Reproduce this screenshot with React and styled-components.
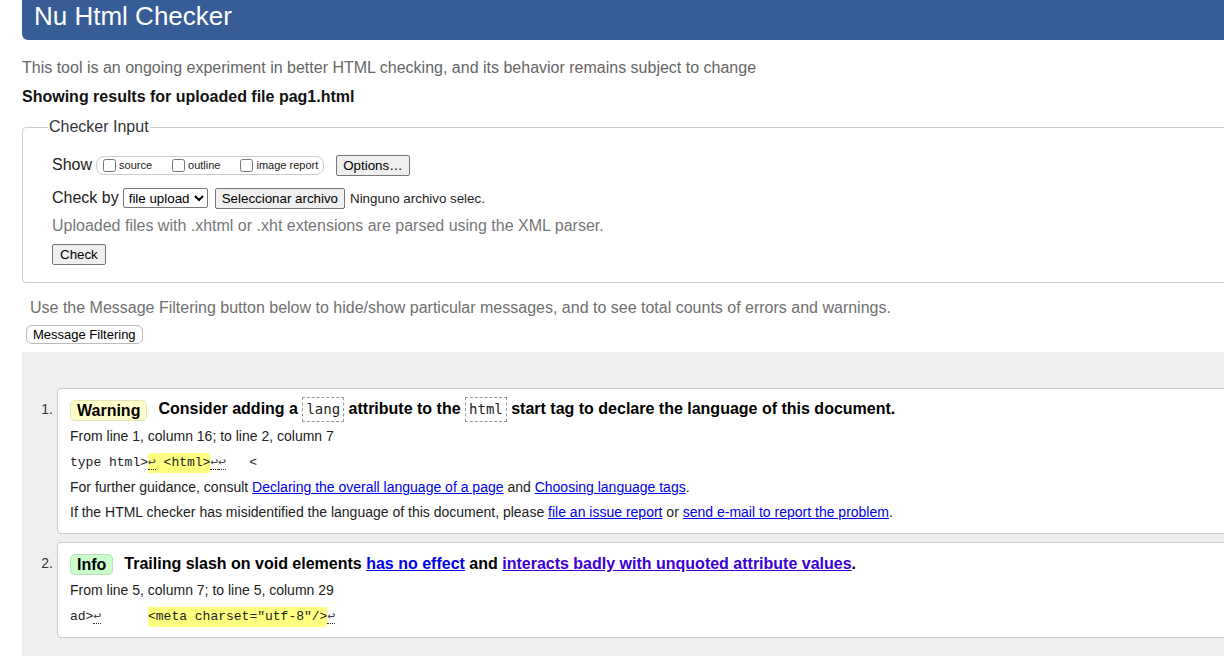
import React from 'react'
import styled, { createGlobalStyle } from 'styled-components'

const GlobalStyle = createGlobalStyle`
    html, body {
        margin: 0;
        padding: 0;
        background: #ffffff;
        overflow: hidden;
    }
    body {
        font-family: "Liberation Sans", Arial, sans-serif;
        color: #000;
    }
`

const LF = () => <Lf title="Line break">↩</Lf>

export default function App() {
    return (
        <Page>
            <GlobalStyle />
            <Header>
                <Title>Nu Html Checker</Title>
            </Header>
            <Intro>This tool is an ongoing experiment in better HTML checking, and its behavior remains subject to change</Intro>
            <Showing>Showing results for uploaded file pag1.html</Showing>

            <InputSet>
                <Legend>Checker Input</Legend>
                <FieldRow>
                    <FieldLabel>Show</FieldLabel>
                    <CheckGroup>
                        <CheckItem><input type="checkbox" />source</CheckItem>
                        <CheckItem><input type="checkbox" />outline</CheckItem>
                        <CheckItem><input type="checkbox" />image report</CheckItem>
                    </CheckGroup>
                    <Button $ml={12}>Options…</Button>
                </FieldRow>
                <FieldRow $mt={9}>
                    <FieldLabel>Check by</FieldLabel>
                    <Select defaultValue="file">
                        <option value="address">address</option>
                        <option value="file">file upload</option>
                        <option value="text">text input</option>
                    </Select>
                    <Button $ml={7}>Seleccionar archivo</Button>
                    <FileName>Ninguno archivo selec.</FileName>
                </FieldRow>
                <Note>Uploaded files with .xhtml or .xht extensions are parsed using the XML parser.</Note>
                <CheckButton>Check</CheckButton>
            </InputSet>

            <FilterNote>Use the Message Filtering button below to hide/show particular messages, and to see total counts of errors and warnings.</FilterNote>
            <FilterButton>Message Filtering</FilterButton>

            <Results>
                <Item>
                    <Num>1.</Num>
                    <Card>
                        <MsgTitle>
                            <Badge $kind="warning">Warning</Badge>
                            <MsgText>
                                Consider adding a <CodeChip>lang</CodeChip> attribute to the <CodeChip>html</CodeChip> start tag to declare the language of this document.
                            </MsgText>
                        </MsgTitle>
                        <Line>From line 1, column 16; to line 2, column 7</Line>
                        <Extract>type html&gt;<Mark><LF /> &lt;html&gt;</Mark><LF /><LF />   &lt;</Extract>
                        <Line>For further guidance, consult <Link href="#">Declaring the overall language of a page</Link> and <Link href="#">Choosing language tags</Link>.</Line>
                        <Line>If the HTML checker has misidentified the language of this document, please <Link href="#">file an issue report</Link> or <Link href="#">send e-mail to report the problem</Link>.</Line>
                    </Card>
                </Item>
                <Item>
                    <Num>2.</Num>
                    <Card>
                        <MsgTitle>
                            <Badge $kind="info">Info</Badge>
                            <MsgText>
                                Trailing slash on void elements <Link href="#">has no effect</Link> and <Link href="#" $visited>interacts badly with unquoted attribute values</Link>.
                            </MsgText>
                        </MsgTitle>
                        <Line>From line 5, column 7; to line 5, column 29</Line>
                        <Extract>ad&gt;<LF />      <Mark>&lt;meta charset="utf-8"/&gt;</Mark><LF /></Extract>
                    </Card>
                </Item>
            </Results>
        </Page>
    )
}

const Page = styled.div`
    width: 1280px;
    padding-left: 22px;
    box-sizing: border-box;
`

const Header = styled.header`
    height: 40px;
    background-color: #365d95;
    border-radius: 0 0 0 6px;
    padding-left: 12px;
    box-sizing: border-box;
`

const Title = styled.h1`
    margin: 0;
    font-size: 26px;
    font-weight: normal;
    line-height: 32px;
    color: #ffffff;
`

const Intro = styled.p`
    margin: 18px 0 0;
    font-size: 16px;
    line-height: 20px;
    color: #666666;
`

const Showing = styled.p`
    margin: 9px 0 0;
    font-size: 16px;
    line-height: 20px;
    font-weight: bold;
    color: #111;
`

const InputSet = styled.fieldset`
    margin: 10px 0 0;
    padding: 16px 29px 17px;
    border: 1px solid #cccccc;
    border-radius: 4px;
    min-width: 0;
`

const Legend = styled.legend`
    margin-left: -4px;
    padding: 0 1px;
    font-size: 16px;
    line-height: 20px;
    color: #333;
`

const FieldRow = styled.div`
    display: flex;
    align-items: center;
    height: 24px;
    margin-top: ${p => p.$mt || 0}px;
`

const FieldLabel = styled.span`
    font-size: 16px;
    color: #222;
    margin-right: 4px;
`

const CheckGroup = styled.span`
    display: inline-flex;
    align-items: center;
    gap: 20px;
    height: 17px;
    padding: 0 5px 0 6px;
    border: 1px solid #cccccc;
    border-radius: 8px;
`

const CheckItem = styled.label`
    display: inline-flex;
    align-items: center;
    font-size: 11px;
    color: #222;

    input {
        width: 13px;
        height: 13px;
        margin: 0 3px 0 0;
    }
`

const Button = styled.button`
    font-family: "Liberation Sans", Arial, sans-serif;
    font-size: 13.33px;
    line-height: 15px;
    color: #000;
    background: #efefef;
    border: 1px solid #767676;
    border-radius: 2px;
    padding: 2px 6px;
    margin: 0 0 0 ${p => p.$ml || 0}px;
`

const Select = styled.select`
    font-family: "Liberation Sans", Arial, sans-serif;
    font-size: 13.33px;
    height: 20px;
    width: 85px;
    padding: 0 0 0 1px;
    border: 1px solid #767676;
    border-radius: 2px;
    background: #fff;
    color: #000;
`

const FileName = styled.span`
    font-size: 13.33px;
    color: #222;
    margin-left: 5px;
`

const Note = styled.p`
    margin: 6px 0 0;
    font-size: 16px;
    line-height: 20px;
    color: #777777;
`

const CheckButton = styled(Button)`
    display: block;
    margin-top: 8px;
    padding: 2px 7px;
`

const FilterNote = styled.p`
    margin: 15px 0 0;
    padding-left: 8px;
    font-size: 16px;
    line-height: 20px;
    color: #707070;
`

const FilterButton = styled.button`
    display: block;
    margin: 7px 0 0 4px;
    height: 19px;
    padding: 0 6px;
    font-family: "Liberation Sans", Arial, sans-serif;
    font-size: 13px;
    color: #000;
    background: #fdfdfd;
    border: 1px solid #bbbbbb;
    border-radius: 6px;
`

const Results = styled.ol`
    margin: 8px 0 0;
    padding: 36px 0 40px;
    list-style: none;
    background-color: #eeeeee;
    min-height: 400px;
`

const Item = styled.li`
    display: flex;
    align-items: flex-start;
    margin-bottom: 8px;
`

const Num = styled.span`
    width: 35px;
    box-sizing: border-box;
    padding-right: 4px;
    margin-top: 10px;
    text-align: right;
    font-size: 14px;
    line-height: 22px;
    color: #333;
`

const Card = styled.div`
    flex: 1;
    background: #ffffff;
    border: 1px solid #cccccc;
    border-radius: 4px;
    padding: 10px 12px 8px;
`

const MsgTitle = styled.div`
    display: flex;
    align-items: center;
    height: 22px;
    margin-bottom: 3px;
`

const Badge = styled.strong`
    display: inline-block;
    font-size: 16px;
    line-height: 19px;
    padding: 0 6px;
    border-radius: 5px;
    border: 1px solid ${p => (p.$kind === 'info' ? '#b8e0b8' : '#e4e4b0')};
    background: ${p => (p.$kind === 'info' ? '#ccffcc' : '#ffffcc')};
    margin-right: 11px;
    color: #000;
`

const MsgText = styled.strong`
    font-size: 16px;
    line-height: 22px;
    white-space: nowrap;
    color: #000;
`

const CodeChip = styled.code`
    display: inline-block;
    font-family: "DejaVu Sans Mono", "Liberation Mono", monospace;
    font-size: 14px;
    font-weight: normal;
    line-height: 17px;
    padding: 3px 3px;
    border: 1px dashed #999999;
    color: #222;
    vertical-align: middle;
    margin-top: -2px;
`

const Line = styled.p`
    margin: 0;
    font-size: 14px;
    line-height: 25px;
    color: #222;
`

const Extract = styled.p`
    margin: 0;
    font-family: "Liberation Mono", monospace;
    font-size: 13px;
    line-height: 25px;
    white-space: pre;
    color: #222;
`

const Mark = styled.mark`
    background: #ffff80;
    color: #222;
    padding: 2px 0 3px;
`

const Lf = styled.b`
    font-family: "DejaVu Sans Mono", monospace;
    font-size: 12.9px;
    font-weight: normal;
    border-bottom: 1px dotted #333;
    color: #444;
`

const Link = styled.a`
    color: ${p => (p.$visited ? '#3b00d8' : '#0000ee')};
    text-decoration: underline;
`
